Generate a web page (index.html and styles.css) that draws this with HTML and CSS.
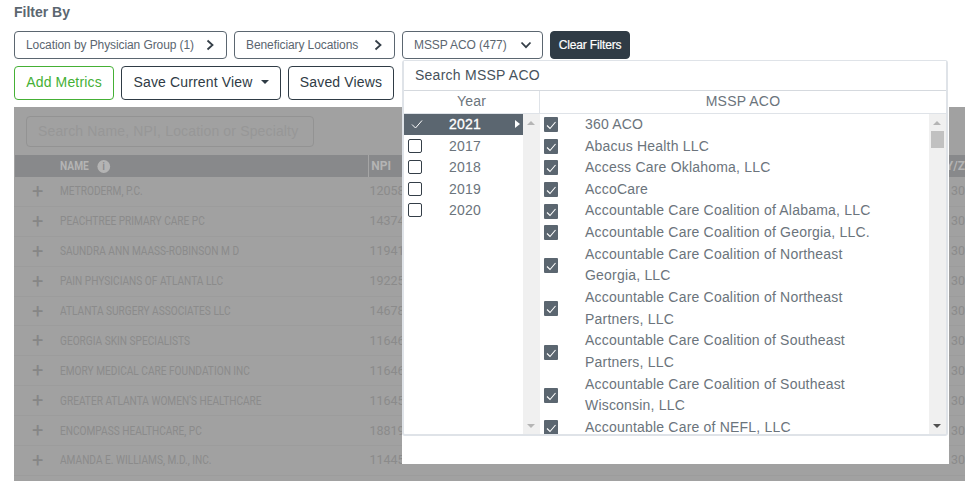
FILE: index.html
```html
<!DOCTYPE html>
<html lang="en">
<head>
<meta charset="utf-8">
<title>Filter By</title>
<link rel="stylesheet" href="styles.css">
</head>
<body>
<div class="page">
  <h2 class="title">Filter By</h2>
  <div class="filters">
    <button class="chip chip-a">Location by Physician Group (1)<svg class="chev" viewBox="0 0 10 12"><path d="M2.5 1.5 7.5 6 2.5 10.5"/></svg></button>
    <button class="chip chip-b">Beneficiary Locations<svg class="chev" viewBox="0 0 10 12"><path d="M2.5 1.5 7.5 6 2.5 10.5"/></svg></button>
    <div class="chip-wrap">
      <button class="chip chip-c">MSSP ACO (477)<svg class="chev-d" viewBox="0 0 12 10"><path d="M1.5 2.5 6 7.2 10.5 2.5"/></svg></button>
      <div class="panel">
        <div class="panel-frame">
          <div class="search">Search MSSP ACO</div>
          <div class="heads"><div class="head-year">Year</div><div class="head-aco">MSSP ACO</div></div>
          <div class="lists">
            <div class="years">
              <div class="year-list">
                <div class="year active"><svg class="tick-bare" viewBox="0 0 14 14"><path d="M2 7.5 5.5 11 12 3.5"/></svg><span>2021</span><i class="arrow"></i></div>
                <div class="year"><b class="box"></b><span>2017</span></div>
                <div class="year"><b class="box"></b><span>2018</span></div>
                <div class="year"><b class="box"></b><span>2019</span></div>
                <div class="year"><b class="box"></b><span>2020</span></div>
              </div>
              <div class="track"><i class="up pale"></i><i class="down pale"></i></div>
            </div>
            <div class="acos">
              <div class="aco-list">
                <div class="aco"><b class="cb"><svg viewBox="0 0 14 14"><path d="M3 7.5 6 10.5 11.5 4"/></svg></b><span>360 ACO</span></div>
                <div class="aco"><b class="cb"><svg viewBox="0 0 14 14"><path d="M3 7.5 6 10.5 11.5 4"/></svg></b><span>Abacus Health LLC</span></div>
                <div class="aco"><b class="cb"><svg viewBox="0 0 14 14"><path d="M3 7.5 6 10.5 11.5 4"/></svg></b><span>Access Care Oklahoma, LLC</span></div>
                <div class="aco"><b class="cb"><svg viewBox="0 0 14 14"><path d="M3 7.5 6 10.5 11.5 4"/></svg></b><span>AccoCare</span></div>
                <div class="aco"><b class="cb"><svg viewBox="0 0 14 14"><path d="M3 7.5 6 10.5 11.5 4"/></svg></b><span>Accountable Care Coalition of Alabama, LLC</span></div>
                <div class="aco"><b class="cb"><svg viewBox="0 0 14 14"><path d="M3 7.5 6 10.5 11.5 4"/></svg></b><span>Accountable Care Coalition of Georgia, LLC.</span></div>
                <div class="aco"><b class="cb"><svg viewBox="0 0 14 14"><path d="M3 7.5 6 10.5 11.5 4"/></svg></b><span>Accountable Care Coalition of Northeast<br>Georgia, LLC</span></div>
                <div class="aco"><b class="cb"><svg viewBox="0 0 14 14"><path d="M3 7.5 6 10.5 11.5 4"/></svg></b><span>Accountable Care Coalition of Northeast<br>Partners, LLC</span></div>
                <div class="aco"><b class="cb"><svg viewBox="0 0 14 14"><path d="M3 7.5 6 10.5 11.5 4"/></svg></b><span>Accountable Care Coalition of Southeast<br>Partners, LLC</span></div>
                <div class="aco"><b class="cb"><svg viewBox="0 0 14 14"><path d="M3 7.5 6 10.5 11.5 4"/></svg></b><span>Accountable Care Coalition of Southeast<br>Wisconsin, LLC</span></div>
                <div class="aco"><b class="cb"><svg viewBox="0 0 14 14"><path d="M3 7.5 6 10.5 11.5 4"/></svg></b><span>Accountable Care of NEFL, LLC</span></div>
              </div>
              <div class="track track-main"><i class="up pale"></i><i class="thumb"></i><i class="down dark"></i></div>
            </div>
          </div>
        </div>
      </div>
    </div>
    <button class="clear">Clear Filters</button>
  </div>
  <div class="actions">
    <button class="act act-green">Add Metrics</button>
    <button class="act act-save">Save Current View<i class="caret"></i></button>
    <button class="act act-views">Saved Views</button>
  </div>
  <div class="backdrop">
    <div class="table-search"><div class="search-input">Search Name, NPI, Location or Specialty</div></div>
    <div class="t-head"><div class="c-plus"></div><div class="c-name">NAME <i class="info">i</i></div><div class="c-npi">NPI</div><div class="c-last">Y/Z</div></div>
    <div class="t-row"><div class="c-plus">+</div><div class="c-name">METRODERM, P.C.</div><div class="c-npi">12058</div><div class="c-last">N 30</div></div>
    <div class="t-row"><div class="c-plus">+</div><div class="c-name">PEACHTREE PRIMARY CARE PC</div><div class="c-npi">14374</div><div class="c-last">N 30</div></div>
    <div class="t-row"><div class="c-plus">+</div><div class="c-name">SAUNDRA ANN MAASS-ROBINSON M D</div><div class="c-npi">11941</div><div class="c-last">N 30</div></div>
    <div class="t-row"><div class="c-plus">+</div><div class="c-name">PAIN PHYSICIANS OF ATLANTA LLC</div><div class="c-npi">19225</div><div class="c-last">N 30</div></div>
    <div class="t-row"><div class="c-plus">+</div><div class="c-name">ATLANTA SURGERY ASSOCIATES LLC</div><div class="c-npi">14678</div><div class="c-last">N 30</div></div>
    <div class="t-row"><div class="c-plus">+</div><div class="c-name">GEORGIA SKIN SPECIALISTS</div><div class="c-npi">11646</div><div class="c-last">N 30</div></div>
    <div class="t-row"><div class="c-plus">+</div><div class="c-name">EMORY MEDICAL CARE FOUNDATION INC</div><div class="c-npi">11646</div><div class="c-last">N 30</div></div>
    <div class="t-row"><div class="c-plus">+</div><div class="c-name">GREATER ATLANTA WOMEN'S HEALTHCARE</div><div class="c-npi">11645</div><div class="c-last">N 30</div></div>
    <div class="t-row"><div class="c-plus">+</div><div class="c-name">ENCOMPASS HEALTHCARE, PC</div><div class="c-npi">18819</div><div class="c-last">N 30</div></div>
    <div class="t-row"><div class="c-plus">+</div><div class="c-name">AMANDA E. WILLIAMS, M.D., INC.</div><div class="c-npi">11445</div><div class="c-last">N 30</div></div>
  </div>
</div>
</body>
</html>
```
FILE: styles.css
```css
* { box-sizing: border-box; }
html, body { margin: 0; height: 100%; overflow: hidden; background: #fff; }
body { font-family: "Liberation Sans", Arial, sans-serif; color: #5b6670; }
button { font-family: inherit; cursor: pointer; margin: 0; }
.page { width: 965px; height: 481px; padding: 4px 0 0 14px; overflow: hidden; }
.title { margin: 0; font-size: 14px; line-height: 16px; font-weight: 700; color: #5b6670; }
.filters { display: flex; align-items: flex-start; gap: 7px; margin-top: 11px; height: 28px; }
.chip { display: flex; align-items: center; justify-content: space-between; height: 28px; padding: 0 11px 0 11px; font-size: 12px; letter-spacing: -0.09px; color: #5b6670; background: #fff; border: 1px solid #5b6670; border-radius: 4px; }
.chip-a { width: 213px; }
.chip-b { width: 161px; }
.chip-c { width: 141px; padding-right: 10px; }
.chip-wrap { position: relative; width: 141px; height: 28px; }
.chev { width: 10px; height: 12px; fill: none; stroke: #343e47; stroke-width: 1.8; }
.chev-d { width: 12px; height: 10px; fill: none; stroke: #343e47; stroke-width: 1.8; }
.clear { height: 28px; width: 80px; padding: 0; font-size: 12px; letter-spacing: -0.15px; color: #fff; background: #2f3b45; border: 1px solid #2f3b45; border-radius: 4px; -webkit-text-stroke: 0.2px #fff; }
.actions { display: flex; gap: 7px; margin-top: 7px; height: 34px; }
.act { height: 34px; padding: 0 0 2px; font-size: 14px; background: #fff; border-radius: 4px; letter-spacing: 0.15px; }
.act-green { width: 100px; color: #45b035; border: 1px solid #45b035; }
.act-save { width: 160px; color: #2f3b45; border: 1px solid #2f3b45; }
.act-views { width: 106px; color: #2f3b45; border: 1px solid #2f3b45; }
.caret { display: inline-block; margin-left: 8px; vertical-align: 3px; border-top: 4px solid #2f3b45; border-left: 4px solid transparent; border-right: 4px solid transparent; }
.backdrop { margin-top: 7px; width: 951px; height: 374px; background: #a1a1a1; overflow: hidden; color: #8b8b8b; font-family: Roboto, sans-serif; }
.table-search { padding: 9px 0 0 12px; height: 48px; }
.search-input { width: 288px; height: 31px; padding-left: 11px; font-size: 14px; line-height: 29px; font-family: "Liberation Sans", sans-serif; letter-spacing: 0.15px; color: #979797; border: 1px solid #939393; border-radius: 4px; }
.t-head { display: flex; align-items: center; height: 22px; margin-left: 1px; background: #88898b; color: #b4b4b4; font-size: 12px; font-weight: 700; }
.t-head .c-plus { width: 45px; }
.t-head .c-name { width: 309px; transform: scaleX(0.85); }
.t-head .c-npi { border-left: 1px solid #a5a5a5; height: 22px; line-height: 22px; padding-left: 2px; }
.t-head .c-last { padding-left: 2px; }
.c-plus { width: 46px; padding-left: 18px; font-size: 20px; font-weight: 400; color: #868686; }
.c-name { width: 309px; transform: scaleX(0.81); transform-origin: left center; white-space: nowrap; }
.c-npi { width: 577px; padding-left: 3px; }
.c-last { flex: 1; white-space: nowrap; }
.t-row { display: flex; align-items: center; height: 29.9px; padding-bottom: 1px; font-size: 12.5px; border-bottom: 1px solid #9c9c9c; }
.info { display: inline-block; width: 15px; height: 13px; margin-left: 7px; border-radius: 50%; background: #b4b4b4; color: #88898b; font-size: 10px; line-height: 13px; text-align: center; font-style: normal; }
.panel { position: absolute; z-index: 5; left: 0; top: 29px; width: 547px; height: 404px; background: #fff; }
.panel-frame { width: 546px; height: 376px; border: 2px solid #dfe3e8; border-top-width: 1px; border-radius: 3px; display: flex; flex-direction: column; }
.search { height: 30px; padding-left: 11px; font-size: 14px; line-height: 28px; letter-spacing: 0.25px; color: #47525c; background: #fff; border-bottom: 1px solid #d5d9de; flex: none; }
.heads { display: flex; height: 22.85px; flex: none; font-size: 14px; line-height: 20px; letter-spacing: 0.2px; text-align: center; color: #6b747c; border-bottom: 1px solid #dfe3e8; }
.head-year { width: 136px; border-right: 1px solid #dfe3e8; }
.head-aco { flex: 1; }
.lists { display: flex; flex: 1; min-height: 0; }
.years { display: flex; width: 136px; flex: none; }
.year-list { width: 119px; flex: none; }
.year { position: relative; display: flex; align-items: center; height: 21.6px; padding-left: 4px; font-size: 14px; letter-spacing: 0.25px; color: #6b747c; }
.year:first-child { height: 20.9px; }
.year span { margin-left: 27px; }
.year.active { background: #5b6670; color: #fff; padding-left: 6px; -webkit-text-stroke: 0.3px #fff; }
.year.active span { margin-left: 25px; }
.tick-bare { width: 14px; height: 14px; fill: none; stroke: #fff; stroke-width: 1; flex: none; }
.arrow { position: absolute; right: 3px; top: 6px; border-left: 5px solid #fff; border-top: 4.5px solid transparent; border-bottom: 4.5px solid transparent; }
.box { display: block; width: 14px; height: 14px; flex: none; border: 1px solid #343e47; border-radius: 2px; background: #fff; }
.track { position: relative; width: 17px; flex: none; background: #f0f0f0; }
.up, .down { position: absolute; left: 4px; width: 0; border-left: 4px solid transparent; border-right: 4px solid transparent; }
.up { top: 7px; }
.down { bottom: 6px; }
.up.pale { border-bottom: 4px solid #b5b5b5; }
.down.pale { border-top: 4px solid #b5b5b5; }
.down.dark { border-top: 4px solid #505050; }
.thumb { position: absolute; left: 2px; top: 17px; width: 13px; height: 17px; background: #c1c1c1; }
.acos { display: flex; flex: 1; min-width: 0; }
.aco-list { flex: 1; min-width: 0; overflow: hidden; padding-left: 4px; }
.aco { display: flex; align-items: center; padding: 0; font-size: 14px; line-height: 21.65px; letter-spacing: 0.2px; color: #6b747c; }
.aco span { margin-left: 27px; display: block; }
.cb { display: block; width: 14px; height: 15px; flex: none; border-radius: 1px; background: #5b6670; }
.cb svg { display: block; width: 14px; height: 14px; margin-top: 1px; fill: none; stroke: #fff; stroke-width: 1.1; }
```
